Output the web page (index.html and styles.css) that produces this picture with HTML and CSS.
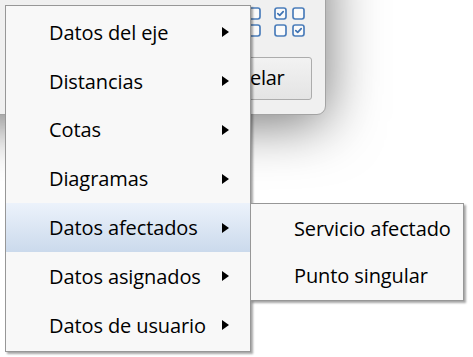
FILE: index.html
```html
<!DOCTYPE html>
<html lang="es">
<head>
<meta charset="utf-8">
<title>Menú</title>
<link rel="stylesheet" href="styles.css">
</head>
<body>
<div class="desk">
  <div class="dialog">
    <div class="checks">
      <div class="grp">
        <svg class="cb" viewBox="0 0 13 13"><rect x="1" y="1" width="11" height="11" rx="2.2"/></svg>
        <svg class="cb" viewBox="0 0 13 13"><rect x="1" y="1" width="11" height="11" rx="2.2"/></svg>
        <svg class="cb" viewBox="0 0 13 13"><rect x="1" y="1" width="11" height="11" rx="2.2"/></svg>
        <svg class="cb" viewBox="0 0 13 13"><rect x="1" y="1" width="11" height="11" rx="2.2"/></svg>
      </div>
      <div class="grp">
        <svg class="cb" viewBox="0 0 13 13"><rect x="1" y="1" width="11" height="11" rx="2.2"/><path d="M3.8 6.6 L5.7 8.4 L9.2 4.6"/></svg>
        <svg class="cb" viewBox="0 0 13 13"><rect x="1" y="1" width="11" height="11" rx="2.2"/></svg>
        <svg class="cb" viewBox="0 0 13 13"><rect x="1" y="1" width="11" height="11" rx="2.2"/></svg>
        <svg class="cb" viewBox="0 0 13 13"><rect x="1" y="1" width="11" height="11" rx="2.2"/><path d="M3.8 6.6 L5.7 8.4 L9.2 4.6"/></svg>
      </div>
    </div>
    <div class="actions">
      <button class="btn">Cancelar</button>
    </div>
  </div>

  <div class="menu">
    <div class="item">Datos del eje<span class="arrow"></span></div>
    <div class="item">Distancias<span class="arrow"></span></div>
    <div class="item">Cotas<span class="arrow"></span></div>
    <div class="item">Diagramas<span class="arrow"></span></div>
    <div class="item active">Datos afectados<span class="arrow"></span></div>
    <div class="item">Datos asignados<span class="arrow"></span></div>
    <div class="item">Datos de usuario<span class="arrow"></span></div>
  </div>

  <div class="submenu">
    <div class="item">Servicio afectado</div>
    <div class="item">Punto singular</div>
  </div>
</div>
</body>
</html>
```
FILE: styles.css
```css
html, body {
  margin: 0;
  padding: 0;
}
body {
  width: 473px;
  height: 357px;
  overflow: hidden;
  background: #ffffff;
  font-family: "Open Sans", "Noto Sans", sans-serif;
  color: #000;
}
.desk {
  position: relative;
  width: 473px;
  height: 357px;
  overflow: hidden;
  background: #ffffff;
}

/* background dialog window */
.dialog {
  position: absolute;
  left: -60px;
  top: -60px;
  width: 386px;
  height: 175px;
  box-sizing: border-box;
  background: #f0f0f0;
  border: 1px solid #a3a3a3;
  border-radius: 0 0 9px 0;
  box-shadow: 0 8px 55px rgba(0, 0, 0, 0.55);
  display: flex;
  flex-direction: column;
  align-items: flex-end;
  padding: 66px 20px 0 0;
}
.checks {
  display: flex;
  gap: 13px;
}
.grp {
  display: grid;
  grid-template-columns: 13px 13px;
  column-gap: 5px;
  row-gap: 4px;
}
.cb {
  width: 13px;
  height: 13px;
  display: block;
}
.cb rect {
  fill: #fafafa;
  stroke: #4b7dba;
  stroke-width: 1.7;
}
.cb path {
  fill: none;
  stroke: #3f73b3;
  stroke-width: 1.7;
  stroke-linecap: round;
  stroke-linejoin: round;
}
.actions {
  margin-top: 20px;
  margin-right: -7px;
}
.btn {
  width: 130px;
  height: 43px;
  box-sizing: border-box;
  border: 1px solid #acacac;
  border-radius: 3px;
  background: linear-gradient(#f2f2f2, #e4e4e4);
  font-family: "Open Sans", "Noto Sans", sans-serif;
  font-size: 20px;
  letter-spacing: -0.3px;
  color: #000;
  padding: 0 4px 2px 0;
}

/* context menu */
.menu {
  position: absolute;
  left: 5px;
  top: 5px;
  width: 246px;
  box-sizing: border-box;
  background: #f8f8f8;
  border: 1px solid #979797;
  padding: 2px 0 1px 0;
  box-shadow: 2px 2px 2px rgba(0, 0, 0, 0.35);
}
.item {
  height: 48.8px;
  display: flex;
  align-items: center;
  padding-left: 43px;
  font-size: 20px;
  letter-spacing: -0.1px;
  white-space: nowrap;
}
.item.active {
  background: linear-gradient(#ecf2fb, #cbdaec);
}
.arrow {
  margin-left: auto;
  margin-right: 21px;
  width: 0;
  height: 0;
  border-left: 7px solid #000;
  border-top: 5px solid transparent;
  border-bottom: 5px solid transparent;
}

.submenu {
  position: absolute;
  left: 250px;
  top: 203px;
  width: 214px;
  box-sizing: border-box;
  background: #f8f8f8;
  border: 1px solid #979797;
  padding: 1px 0;
  box-shadow: 2px 2px 2px rgba(0, 0, 0, 0.35);
}
.submenu .item {
  height: 47px;
}
```
